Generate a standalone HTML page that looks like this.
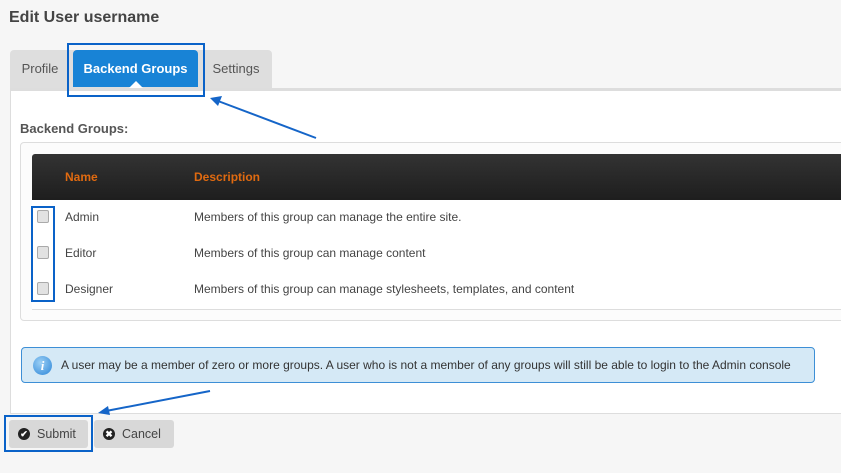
<!DOCTYPE html>
<html><head><meta charset="utf-8"><style>
*{box-sizing:border-box;margin:0;padding:0}
body{width:841px;height:473px;overflow:hidden;background:#f6f6f6;font-family:"Liberation Sans",Arial,sans-serif;position:relative;color:#444}
.a{position:absolute}
h1{position:absolute;left:9px;top:9px;font-size:16px;font-weight:bold;color:#444}
.tabbar{left:10px;top:50px;width:262px;height:40px;background:#dedede;border-radius:4px 4px 0 0}
.tab{top:50px;height:38px;line-height:38px;font-size:13px;color:#555;text-align:center}
.panel{left:10px;top:88px;width:840px;height:326px;background:#fff;border-left:1px solid #ddd;border-top:3px solid #ddd;border-bottom:1px solid #ddd}
.lbl{left:20px;top:121px;font-size:13px;font-weight:bold;color:#555}
.fs{left:20px;top:142px;width:830px;height:179px;border:1px solid #ddd;border-radius:4px;background:#fcfcfc}
.th{left:32px;top:154px;width:820px;height:46px;background:linear-gradient(#333,#1e1e1e);border-radius:3px 0 0 0}
.th span{position:absolute;top:16px;color:#e06a10;font-weight:bold;font-size:12px}
.tb{left:32px;top:200px;width:820px;height:110px;background:#fff;border-bottom:1px solid #ddd}
.row{font-size:12px;color:#444}
.cb{width:12px;height:13px;border:1px solid #aaa;border-radius:2px;background:#e2e2e2}
.info{left:21px;top:347px;width:794px;height:36px;background:#d5e9f6;border:1px solid #3d8fd6;border-radius:4px;font-size:12px;color:#333;line-height:34px;padding-left:39px;white-space:nowrap;overflow:hidden}
.btn{top:420px;height:28px;background:#d8d8d8;border-radius:3px;font-size:12.5px;color:#444;line-height:28px}
.ic{position:absolute;left:9px;top:8px;width:12px;height:12px;border-radius:50%;background:#222;color:#fff;font-size:9px;line-height:12px;text-align:center;font-weight:bold}
.box{border:2px solid #0a62c8}
</style></head><body>
<h1>Edit User username</h1>
<div class="a tabbar"></div>
<div class="a tab" style="left:10px;width:60px">Profile</div>
<div class="a tab" style="left:73px;width:125px;background:#1883d6;color:#fff;border-radius:4px 4px 0 0;height:37px;font-weight:bold">Backend Groups</div>
<div class="a tab" style="left:203px;width:66px">Settings</div>
<div class="a panel"></div>
<div class="a" style="left:129px;top:81px;width:0;height:0;border-left:7px solid transparent;border-right:7px solid transparent;border-bottom:7px solid #fff"></div>
<div class="a box" style="left:67px;top:43px;width:138px;height:54px"></div>
<div class="a lbl">Backend Groups:</div>
<div class="a fs"></div>
<div class="a th"><span style="left:33px">Name</span><span style="left:162px">Description</span></div>
<div class="a tb"></div>
<div class="a row" style="left:65px;top:210px">Admin</div><div class="a row" style="left:194px;top:210px">Members of this group can manage the entire site.</div>
<div class="a row" style="left:65px;top:246px">Editor</div><div class="a row" style="left:194px;top:246px">Members of this group can manage content</div>
<div class="a row" style="left:65px;top:282px">Designer</div><div class="a row" style="left:194px;top:282px">Members of this group can manage stylesheets, templates, and content</div>
<div class="a cb" style="left:37px;top:210px"></div>
<div class="a cb" style="left:37px;top:246px"></div>
<div class="a cb" style="left:37px;top:282px"></div>
<div class="a box" style="left:31px;top:206px;width:24px;height:96px"></div>
<div class="a info">A user may be a member of zero or more groups. A user who is not a member of any groups will still be able to login to the Admin console</div>
<div class="a" style="left:33px;top:356px;width:19px;height:19px;border-radius:50%;background:radial-gradient(circle at 40% 35%,#9cd0f5,#2b85d8);color:#fff;font:bold italic 13px 'Liberation Serif',serif;text-align:center;line-height:19px">i</div>
<div class="a btn" style="left:9px;width:79px"><span class="ic">✔</span><span style="position:absolute;left:28px">Submit</span></div>
<div class="a btn" style="left:94px;width:80px"><span class="ic">✖</span><span style="position:absolute;left:28px">Cancel</span></div>
<div class="a box" style="left:4px;top:415px;width:89px;height:37px"></div>
<svg class="a" style="left:0;top:0" width="841" height="473">
<g stroke="#1565c8" stroke-width="2" fill="#1565c8">
<line x1="316" y1="138" x2="218" y2="101"/>
<polygon points="210,98 222,96 218,106" stroke="none"/>
<line x1="210" y1="391" x2="106" y2="411"/>
<polygon points="98,413 108,406 110,415" stroke="none"/>
</g></svg>
</body></html>
